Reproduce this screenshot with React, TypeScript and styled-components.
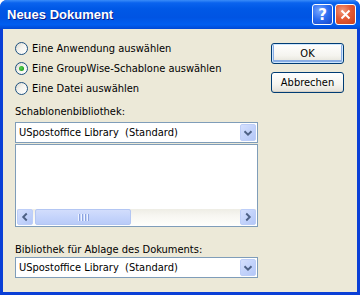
import styled, { createGlobalStyle } from "styled-components";

const Global = createGlobalStyle`
  html, body { margin: 0; padding: 0; background: #ffffff; }
  body {
    font-family: "DejaVu Sans Condensed", "DejaVu Sans", "Liberation Sans", sans-serif;
    font-size: 11px;
    color: #000;
  }
`;

const Window = styled.div`
  width: 360px;
  height: 295px;
  display: flex;
  flex-direction: column;
  background: #0a3fd6;
  border-radius: 7px 7px 0 0;
  overflow: hidden;
`;

const TitleBar = styled.div`
  height: 29px;
  flex: none;
  display: flex;
  align-items: center;
  padding: 0 4px 0 7px;
  background: linear-gradient(
    to bottom,
    #3a8cf8 0%,
    #0a63ee 10%,
    #0058e6 30%,
    #0054e3 60%,
    #005ef0 85%,
    #0048d4 100%
  );
`;

const Title = styled.div`
  flex: 1;
  color: #fff;
  font-family: "Liberation Sans", "DejaVu Sans", sans-serif;
  font-weight: 700;
  font-size: 13px;
  text-shadow: 1px 1px 0 #0a1e8c;
`;

const CapButton = styled.div<{ $kind: "help" | "close" }>`
  width: 21px;
  height: 21px;
  box-sizing: border-box;
  margin-left: 2px;
  border: 1px solid #fff;
  border-radius: 3px;
  display: flex;
  align-items: center;
  justify-content: center;
  color: #fff;
  font-family: "DejaVu Sans", sans-serif;
  font-weight: 700;
  font-size: 15px;
  background: ${(p) =>
    p.$kind === "close"
      ? "radial-gradient(circle at 35% 30%, #f39a7c 0%, #e35a35 45%, #c8401c 100%)"
      : "radial-gradient(circle at 35% 30%, #7aa8ff 0%, #2a6cf0 50%, #1546c8 100%)"};
`;

const Body = styled.div`
  flex: 1;
  margin: 0 3px 3px 3px;
  background: #ece9d8;
  display: flex;
  padding: 9px 0 0 12px;
`;

const LeftCol = styled.div`
  width: 243px;
  display: flex;
  flex-direction: column;
`;

const RightCol = styled.div`
  margin-left: 13px;
  padding-top: 5px;
  display: flex;
  flex-direction: column;
  gap: 8px;
`;

const RadioRow = styled.div`
  height: 20px;
  display: flex;
  align-items: center;
  gap: 4px;
`;

const RadioCircle = styled.span<{ $checked?: boolean }>`
  width: 13px;
  height: 13px;
  box-sizing: border-box;
  border: 1px solid #1c5180;
  border-radius: 50%;
  background: linear-gradient(135deg, #dcd9cf 0%, #f4f3ee 45%, #ffffff 100%);
  display: flex;
  align-items: center;
  justify-content: center;
  &::after {
    content: "";
    display: ${(p) => (p.$checked ? "block" : "none")};
    width: 5px;
    height: 5px;
    border-radius: 50%;
    background: radial-gradient(circle at 40% 40%, #55d34f 0%, #21a121 70%);
  }
`;

const Label = styled.div<{ $top: number }>`
  margin-top: ${(p) => p.$top}px;
  line-height: 15px;
  height: 15px;
`;

const Combo = styled.div<{ $top?: number }>`
  margin-top: ${(p) => p.$top ?? 0}px;
  height: 21px;
  box-sizing: border-box;
  border: 1px solid #7f9db9;
  background: #fff;
  padding: 1px;
  display: flex;
  align-items: center;
`;

const ComboText = styled.div`
  flex: 1;
  padding-left: 2px;
  white-space: pre;
`;

const ArrowBtn = styled.div<{ $w: number; $h: number }>`
  width: ${(p) => p.$w}px;
  height: ${(p) => p.$h}px;
  box-sizing: border-box;
  border: 1px solid #bdcef8;
  border-radius: 2px;
  background: linear-gradient(135deg, #d5e0fd 0%, #c3d3fb 50%, #b4c7f7 100%);
  display: flex;
  align-items: center;
  justify-content: center;
  flex: none;
`;

const ListBox = styled.div`
  margin-top: 1px;
  height: 83px;
  box-sizing: border-box;
  border: 1px solid #7f9db9;
  background: #fff;
  padding: 1px;
  display: flex;
  flex-direction: column;
`;

const ListArea = styled.div`
  flex: 1;
`;

const HScroll = styled.div`
  height: 16px;
  display: flex;
  align-items: stretch;
  background: linear-gradient(to bottom, #eeede5 0%, #f7f6f1 40%, #fefefb 100%);
`;

const Thumb = styled.div`
  margin-left: 2px;
  width: 96px;
  box-sizing: border-box;
  border: 1px solid #b3c6f3;
  border-radius: 2px;
  background: linear-gradient(to bottom, #d2ddfc 0%, #c5d4fb 50%, #b9cbf8 100%);
  display: flex;
  align-items: center;
  justify-content: center;
  gap: 1px;
`;

const Grip = styled.span`
  width: 1px;
  height: 7px;
  background: #eef3ff;
  box-shadow: 1px 0 0 #8ca4e0;
  margin-right: 1px;
`;

const Spacer = styled.div`
  flex: 1;
`;

const Button = styled.div<{ $default?: boolean }>`
  width: 73px;
  height: 21px;
  box-sizing: border-box;
  border: 1px solid #003c74;
  border-radius: 3px;
  background: linear-gradient(to bottom, #ffffff 0%, #f5f4ef 60%, #e3e1d8 100%);
  display: flex;
  align-items: center;
  justify-content: center;
  box-shadow: ${(p) =>
    p.$default
      ? "inset 0 0 0 1px #cee7ff, inset 0 -1px 0 2px #89ade4"
      : "inset 0 -1px 0 0 #d6d0c5"};
`;

const Chevron = ({ dir }: { dir: "down" | "left" | "right" }) => {
  const d =
    dir === "down"
      ? "M4 6 L8 10 L12 6"
      : dir === "left"
      ? "M10 4 L6 8 L10 12"
      : "M6 4 L10 8 L6 12";
  return (
    <svg width="16" height="16" viewBox="0 0 16 16">
      <path d={d} fill="none" stroke="#4d6185" strokeWidth="2.2" />
    </svg>
  );
};

const CaptionX = () => (
  <svg width="13" height="13" viewBox="0 0 13 13">
    <path d="M2.5 2.5 L10.5 10.5 M10.5 2.5 L2.5 10.5" stroke="#fff" strokeWidth="2" />
  </svg>
);

const LIB = "USpostoffice Library  (Standard)";

const App = () => {
  const options = [
    { text: "Eine Anwendung auswählen", checked: false },
    { text: "Eine GroupWise-Schablone auswählen", checked: true },
    { text: "Eine Datei auswählen", checked: false },
  ];
  return (
    <>
      <Global />
      <Window>
        <TitleBar>
          <Title>Neues Dokument</Title>
          <CapButton $kind="help">?</CapButton>
          <CapButton $kind="close">
            <CaptionX />
          </CapButton>
        </TitleBar>
        <Body>
          <LeftCol>
            {options.map((o) => (
              <RadioRow key={o.text}>
                <RadioCircle $checked={o.checked} />
                <span>{o.text}</span>
              </RadioRow>
            ))}
            <Label $top={6}>Schablonenbibliothek:</Label>
            <Combo $top={3}>
              <ComboText>{LIB}</ComboText>
              <ArrowBtn $w={16} $h={17}>
                <Chevron dir="down" />
              </ArrowBtn>
            </Combo>
            <ListBox>
              <ListArea />
              <HScroll>
                <ArrowBtn $w={16} $h={16}>
                  <Chevron dir="left" />
                </ArrowBtn>
                <Thumb>
                  <Grip />
                  <Grip />
                  <Grip />
                  <Grip />
                </Thumb>
                <Spacer />
                <ArrowBtn $w={16} $h={16}>
                  <Chevron dir="right" />
                </ArrowBtn>
              </HScroll>
            </ListBox>
            <Label $top={15}>Bibliothek für Ablage des Dokuments:</Label>
            <Combo>
              <ComboText>{LIB}</ComboText>
              <ArrowBtn $w={16} $h={17}>
                <Chevron dir="down" />
              </ArrowBtn>
            </Combo>
          </LeftCol>
          <RightCol>
            <Button $default>OK</Button>
            <Button>Abbrechen</Button>
          </RightCol>
        </Body>
      </Window>
    </>
  );
};

export default App;
